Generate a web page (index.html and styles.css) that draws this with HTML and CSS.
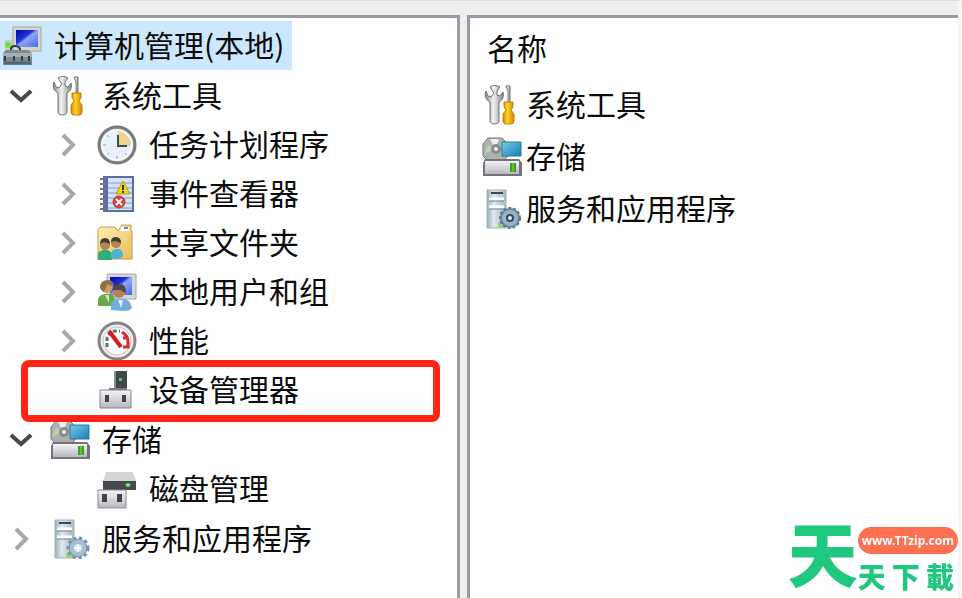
FILE: index.html
```html
<!DOCTYPE html>
<html lang="zh-CN">
<head>
<meta charset="utf-8">
<title>计算机管理</title>
<link rel="stylesheet" href="styles.css">
</head>
<body>
<svg class="defs" aria-hidden="true">
  <defs>
    <linearGradient id="screen" x1="0" y1="0" x2="1" y2="1"><stop offset="0" stop-color="#0508a0"/><stop offset=".4" stop-color="#2032dc"/><stop offset=".5" stop-color="#8fa6f6"/><stop offset="1" stop-color="#4668e8"/></linearGradient>
    <linearGradient id="metal" x1="0" y1="0" x2="1" y2="0"><stop offset="0" stop-color="#8c8c8c"/><stop offset=".45" stop-color="#f4f4f4"/><stop offset="1" stop-color="#868686"/></linearGradient>
    <linearGradient id="gold" x1="0" y1="0" x2="1" y2="0"><stop offset="0" stop-color="#d58a00"/><stop offset=".4" stop-color="#ffd326"/><stop offset="1" stop-color="#d38300"/></linearGradient>
    <linearGradient id="folder" x1="0" y1="0" x2="1" y2="1"><stop offset="0" stop-color="#fff0b4"/><stop offset="1" stop-color="#e6bd5c"/></linearGradient>
    <linearGradient id="case" x1="0" y1="0" x2="0" y2="1"><stop offset="0" stop-color="#f5f5f8"/><stop offset="1" stop-color="#b7b8c0"/></linearGradient>
    <linearGradient id="blue" x1="0" y1="0" x2="1" y2="1"><stop offset="0" stop-color="#79cbea"/><stop offset="1" stop-color="#147eb1"/></linearGradient>
    <linearGradient id="server" x1="0" y1="0" x2="1" y2="0"><stop offset="0" stop-color="#9caeb9"/><stop offset=".35" stop-color="#e0e8ec"/><stop offset="1" stop-color="#a6b6bf"/></linearGradient>
    <symbol id="i-computer" viewBox="0 0 40 40">
      <path d="M3 14h9v14H3z" fill="#c7cccf"/><circle cx="6" cy="19" r="3" fill="#7edb3c"/>
      <path d="M11 1h28v24H11z" fill="#d8d5cd" stroke="#aaa69e"/><path d="M14 4h22v17H14z" fill="url(#screen)"/>
      <path d="M9 27v-4q0-3 4-3t5 3v4" fill="none" stroke="#353b40" stroke-width="2"/>
      <path d="M1 27l3-3h22l4 3v12H1z" fill="#7f8b94"/><path d="M1 27h29v4H1z" fill="#a4b0b7"/>
      <path d="M3 30v5M12 30v5M20 30v5M27 30v5" stroke="#353d43" stroke-width="2"/><path d="M2 37h27" stroke="#59656e" stroke-width="3"/>
    </symbol>
    <symbol id="i-tools" viewBox="0 0 40 40">
      <path d="M8 2l4 6-3 4-3-1-2-5c-2 5 0 9 4 11v19c0 4 9 4 9 0V17c4-2 5-6 4-10l-3 4-3-1V6l3-4c-4-2-7-2-10 0z" fill="url(#metal)" stroke="#707070"/>
      <path d="M24 1h4v16h-2V6z" fill="url(#metal)" stroke="#777"/>
      <path d="M22 17h9v5l-2 3 3 4v7q0 3-3 3h-5q-3 0-3-3v-7l3-4-2-3z" fill="url(#gold)" stroke="#c58000"/>
    </symbol>
    <symbol id="i-clock" viewBox="0 0 40 40">
      <circle cx="20" cy="20" r="18" fill="#b9bcbd" stroke="#777b7d" stroke-width="3"/><circle cx="20" cy="20" r="15" fill="#e6f1f8" stroke="#f9f9f9" stroke-width="2"/>
      <path d="M21 6a15 15 0 0 1 13 15H21z" fill="#efd28b"/><path d="M21 10v11h9" fill="none" stroke="#344e65" stroke-width="2"/>
      <path d="M20 31v3M6 20h3M10 10l2 2M10 30l2-2M30 30l-2-2" stroke="#8ba7bc"/>
    </symbol>
    <symbol id="i-log" viewBox="0 0 40 40">
      <path d="M6 2h31v36H6z" fill="#57719d"/><path d="M11 4h24v32H11z" fill="#d4e3f7"/><path d="M11 9h24M11 14h24M11 19h24M11 24h24M11 29h24M11 34h24" stroke="#7c9ecb"/>
      <path d="M3 5h6M3 10h6M3 15h6M3 20h6M3 25h6M3 30h6M3 35h6" stroke="#77777c" stroke-width="2"/>
      <path d="M26 7l7 13H19z" fill="#f5d416" stroke="#c19b00"/><path d="M26 11v5M26 17v2" stroke="#333" stroke-width="2"/>
      <circle cx="22" cy="28" r="6" fill="#d94242" stroke="#b83333"/><path d="M19 25l6 6m0-6l-6 6" stroke="#fff" stroke-width="2"/>
    </symbol>
    <symbol id="i-folder" viewBox="0 0 40 40">
      <path d="M1 7l2-3h15l3 4 4-6h9v6h1v28H1z" fill="url(#folder)" stroke="#c79d44"/><path d="M24 4h8v4h-9z" fill="#fff"/><path d="M27 5h4" stroke="#4b91d2" stroke-width="2"/>
      <path d="M1 37v-5q0-4 5-5h5q4 2 4 6v4z" fill="#31ad76"/><path d="M14 35v-4q0-4 5-5h3q4 1 4 7-2 3-7 3z" fill="#4bb4d0"/>
      <circle cx="8" cy="22" r="5" fill="#b38257"/><path d="M3 21q0-6 5-6t5 6l-6-2z" fill="#443e32"/><circle cx="19" cy="20" r="5" fill="#b38257"/><path d="M14 19q0-5 5-5t5 6l-6-2z" fill="#443e32"/>
    </symbol>
    <symbol id="i-users" viewBox="0 0 40 40">
      <path d="M10 2h29v25H10z" fill="#d7d7d7" stroke="#a6a6ad"/><path d="M13 5h22v18H13z" fill="url(#screen)"/>
      <path d="M1 34v-6q0-5 7-6h6q4 1 4 7v5z" fill="#68aa4b"/><path d="M8 23h4v8z" fill="#d5edb5"/><circle cx="10" cy="15" r="6" fill="#c99c62"/><path d="M3 16q0-8 8-8 6 0 6 7l-7-3q-1 6-4 8z" fill="#8e7042"/>
      <path d="M14 38v-4q0-6 6-7h7q7 1 8 9-2 3-8 3z" fill="#77acd9"/><path d="M21 28h5l-2 8z" fill="#dcefff"/><circle cx="22" cy="20" r="6" fill="#b7825b"/><path d="M16 18q1-6 7-6t6 9l-6-3z" fill="#514944"/>
    </symbol>
    <symbol id="i-gauge" viewBox="0 0 40 40">
      <circle cx="20" cy="20" r="18" fill="#eee" stroke="#858585" stroke-width="3"/><circle cx="20" cy="20" r="14" fill="#fff" stroke="#c2c2c2"/>
      <path d="M10 26V17q2-6 8-7h5" fill="none" stroke="#52766b" stroke-width="3" stroke-dasharray="4 2"/><path d="M25 11q6 4 6 9v6h-5M29 17h-3" fill="none" stroke="#d9262b" stroke-width="3"/><path d="M12 10l12 16" stroke="#d9191f" stroke-width="4"/>
    </symbol>
    <symbol id="i-device" viewBox="0 0 40 40">
      <path d="M17 1h13v20H17z" fill="#444748"/><path d="M17 1h2v20h-2z" fill="#8b8e8e"/><path d="M22 8h3v3h-3z" fill="#43d16b"/>
      <path d="M12 18h18v4H12z" fill="#777b7d"/><path d="M3 20h31v18H3z" fill="url(#case)" stroke="#85868b"/><path d="M8 25h4v7H8zM25 25h4v7h-4z" fill="#414347"/>
    </symbol>
    <symbol id="i-storage" viewBox="0 0 40 40">
      <path d="M6 1h14l6 6v12l-5 5H6l-5-5V7z" fill="#afb1ae" stroke="#777"/><path d="M13 12L8 2h9z" fill="#eee"/><path d="M13 12L2 17l4-9z" fill="#b7d4aa"/><circle cx="14" cy="12" r="5" fill="#8b8b8b"/><circle cx="14" cy="12" r="2" fill="#eee"/>
      <path d="M20 5h19v14H20z" fill="url(#blue)" stroke="#277b9f"/><path d="M3 22h34l3 4v13H1V26z" fill="#74737a"/><path d="M3 24h34v13H3z" fill="url(#case)"/><path d="M28 26h6v9h-6z" fill="#429e25"/><path d="M31 26v9" stroke="#92dd57"/>
    </symbol>
    <symbol id="i-disk" viewBox="0 0 40 40">
      <path d="M9 3h27l3 9H6z" fill="#d4d5d6"/><path d="M6 12h33v9H6z" fill="#45494b"/><path d="M28 16h6" stroke="#3aa33c" stroke-width="2"/><circle cx="31" cy="16" r="2" fill="#5df15c"/>
      <path d="M1 21h28v18H1z" fill="url(#case)" stroke="#8c8d91"/><path d="M5 25h5v8H5zM20 25h5v8h-5z" fill="#414347"/>
    </symbol>
    <symbol id="i-tower" viewBox="0 0 40 40">
      <path d="M5 1h19v38H5z" fill="url(#server)" stroke="#a4b1b9"/><path d="M9 4h12" stroke="#354a55" stroke-width="2"/><path d="M7 10h15M7 18h15" stroke="#fff" stroke-width="3"/><path d="M7 12h15M7 20h15" stroke="#738690"/><circle cx="19" cy="36" r="3" fill="#89d969"/>
    </symbol>
    <symbol id="i-services" viewBox="0 0 40 40">
      <use href="#i-tower"/><circle cx="28" cy="29" r="9" fill="#a6bfd3" stroke="#7594ab" stroke-width="1"/><circle cx="28" cy="29" r="10" fill="none" stroke="#7594ab" stroke-width="3" stroke-dasharray="3 3"/><circle cx="28" cy="29" r="4" fill="#d5e5ef"/><path d="M28 26v6M25 29h6" stroke="#fff" stroke-width="2"/>
    </symbol>
    <symbol id="i-services-dark" viewBox="0 0 40 40">
      <use href="#i-tower"/><circle cx="28" cy="29" r="9" fill="#9bb3c5" stroke="#6b879c" stroke-width="2"/><circle cx="28" cy="29" r="10" fill="none" stroke="#60798d" stroke-width="2" stroke-dasharray="3 2"/><circle cx="28" cy="29" r="4" fill="#314b62"/><circle cx="28" cy="29" r="2" fill="#dcebf4"/>
    </symbol>
    <symbol id="i-down" viewBox="0 0 24 24"><path d="M2 7l10 9 10-9" fill="none" stroke="#484848" stroke-width="4"/></symbol>
    <symbol id="i-right" viewBox="0 0 24 24"><path d="M7 2l10 10L7 22" fill="none" stroke="#a8a8a8" stroke-width="4"/></symbol>
  </defs>
</svg>
<main class="console">
  <nav class="pane" aria-label="控制台树">
    <div class="row root"><svg class="icon"><use href="#i-computer"/></svg><span class="label">计算机管理(本地)</span></div>
    <ul class="tree">
      <li>
        <div class="row"><button class="toggle" aria-label="折叠"><svg><use href="#i-down"/></svg></button><svg class="icon"><use href="#i-tools"/></svg><span class="label">系统工具</span></div>
        <ul class="branch">
          <li class="row"><button class="toggle" aria-label="展开"><svg><use href="#i-right"/></svg></button><svg class="icon"><use href="#i-clock"/></svg><span class="label">任务计划程序</span></li>
          <li class="row"><button class="toggle" aria-label="展开"><svg><use href="#i-right"/></svg></button><svg class="icon"><use href="#i-log"/></svg><span class="label">事件查看器</span></li>
          <li class="row"><button class="toggle" aria-label="展开"><svg><use href="#i-right"/></svg></button><svg class="icon"><use href="#i-folder"/></svg><span class="label">共享文件夹</span></li>
          <li class="row"><button class="toggle" aria-label="展开"><svg><use href="#i-right"/></svg></button><svg class="icon"><use href="#i-users"/></svg><span class="label">本地用户和组</span></li>
          <li class="row"><button class="toggle" aria-label="展开"><svg><use href="#i-right"/></svg></button><svg class="icon"><use href="#i-gauge"/></svg><span class="label">性能</span></li>
          <li class="row marked"><span class="toggle"></span><svg class="icon"><use href="#i-device"/></svg><span class="label">设备管理器</span></li>
        </ul>
      </li>
      <li>
        <div class="row"><button class="toggle" aria-label="折叠"><svg><use href="#i-down"/></svg></button><svg class="icon"><use href="#i-storage"/></svg><span class="label">存储</span></div>
        <ul class="branch">
          <li class="row"><span class="toggle"></span><svg class="icon"><use href="#i-disk"/></svg><span class="label">磁盘管理</span></li>
        </ul>
      </li>
      <li>
        <div class="row"><button class="toggle" aria-label="展开"><svg><use href="#i-right"/></svg></button><svg class="icon"><use href="#i-services"/></svg><span class="label">服务和应用程序</span></div>
      </li>
    </ul>
  </nav>
  <section class="pane details">
    <h2 class="heading">名称</h2>
    <ul class="items">
      <li class="item"><svg class="icon"><use href="#i-tools"/></svg><span class="label">系统工具</span></li>
      <li class="item"><svg class="icon"><use href="#i-storage"/></svg><span class="label">存储</span></li>
      <li class="item"><svg class="icon"><use href="#i-services-dark"/></svg><span class="label">服务和应用程序</span></li>
    </ul>
  </section>
</main>
<div class="brand">
  <span class="brand-big">天</span>
  <div class="brand-side">
    <span class="brand-url">www.TTzip.com</span>
    <div class="brand-name"><span>天</span><span>下</span><span>載</span></div>
  </div>
</div>
</body>
</html>
```
FILE: styles.css
```css
* { box-sizing: border-box; }

body {
  margin: 0;
  background: #eeeeee;
  color: #0c0c0c;
  font-family: "Noto Sans CJK SC", sans-serif;
  font-size: 30px;
  line-height: 48px;
}

ul { margin: 0; padding: 0; list-style: none; }

.defs { position: absolute; width: 0; height: 0; }

.console {
  display: grid;
  grid-template-columns: 460fr 491fr;
  gap: 7px;
  min-height: 100vh;
  padding-top: 14px;
  border-top: 1px solid #dedede;
  border-right: 4px solid #f5f5f8;
}

.pane {
  background: #fff;
  border-top: 3px solid #999ba4;
  border-right: 3px solid #999ba4;
  padding-top: 3px;
}

.details {
  border-right: 0;
  border-left: 3px solid #999ba4;
  padding: 5px 12px;
}

.row {
  display: flex;
  align-items: center;
  height: 49px;
  padding-left: 9px;
  white-space: nowrap;
}

.root {
  width: max-content;
  padding: 0 8px 0 2px;
  background: #cce8ff;
}

.icon {
  flex: none;
  width: 40px;
  height: 40px;
  margin-right: 12px;
}

.label { padding-bottom: 4px; }

.toggle {
  flex: none;
  width: 24px;
  height: 24px;
  margin: 0 17px 0 0;
  padding: 0;
  border: 0;
  background: none;
}

.toggle svg { display: block; width: 24px; height: 24px; }

.tree { display: grid; gap: 1px; padding-top: 1px; }

.branch { padding-left: 47px; }

.marked { position: relative; }

.marked::after {
  content: "";
  position: absolute;
  inset: -5px 17px -8px -26px;
  border: 7px solid #ff2415;
  border-radius: 8px;
}

.heading {
  margin: 0;
  padding-left: 5px;
  font-size: 30px;
  font-weight: 400;
}

.items { padding-top: 8px; }

.item { display: flex; align-items: center; height: 52px; }

.item .icon { margin-right: 4px; }

.brand {
  position: fixed;
  right: 4px;
  bottom: 4px;
  display: flex;
  align-items: flex-end;
  color: #1fc77f;
  font-weight: 900;
}

.brand-big { font-size: 70px; line-height: 84px; }

.brand-side { display: grid; gap: 4px; }

.brand-url {
  padding: 0 4px;
  border-radius: 14px;
  background: #ff7050;
  color: #fff;
  font: 700 12px/27px "Noto Sans", sans-serif;
  text-align: center;
}

.brand-name {
  display: flex;
  justify-content: space-between;
  padding-right: 4px;
  font-family: "Noto Sans CJK TC", sans-serif;
  font-size: 28px;
  line-height: 36px;
}
```
